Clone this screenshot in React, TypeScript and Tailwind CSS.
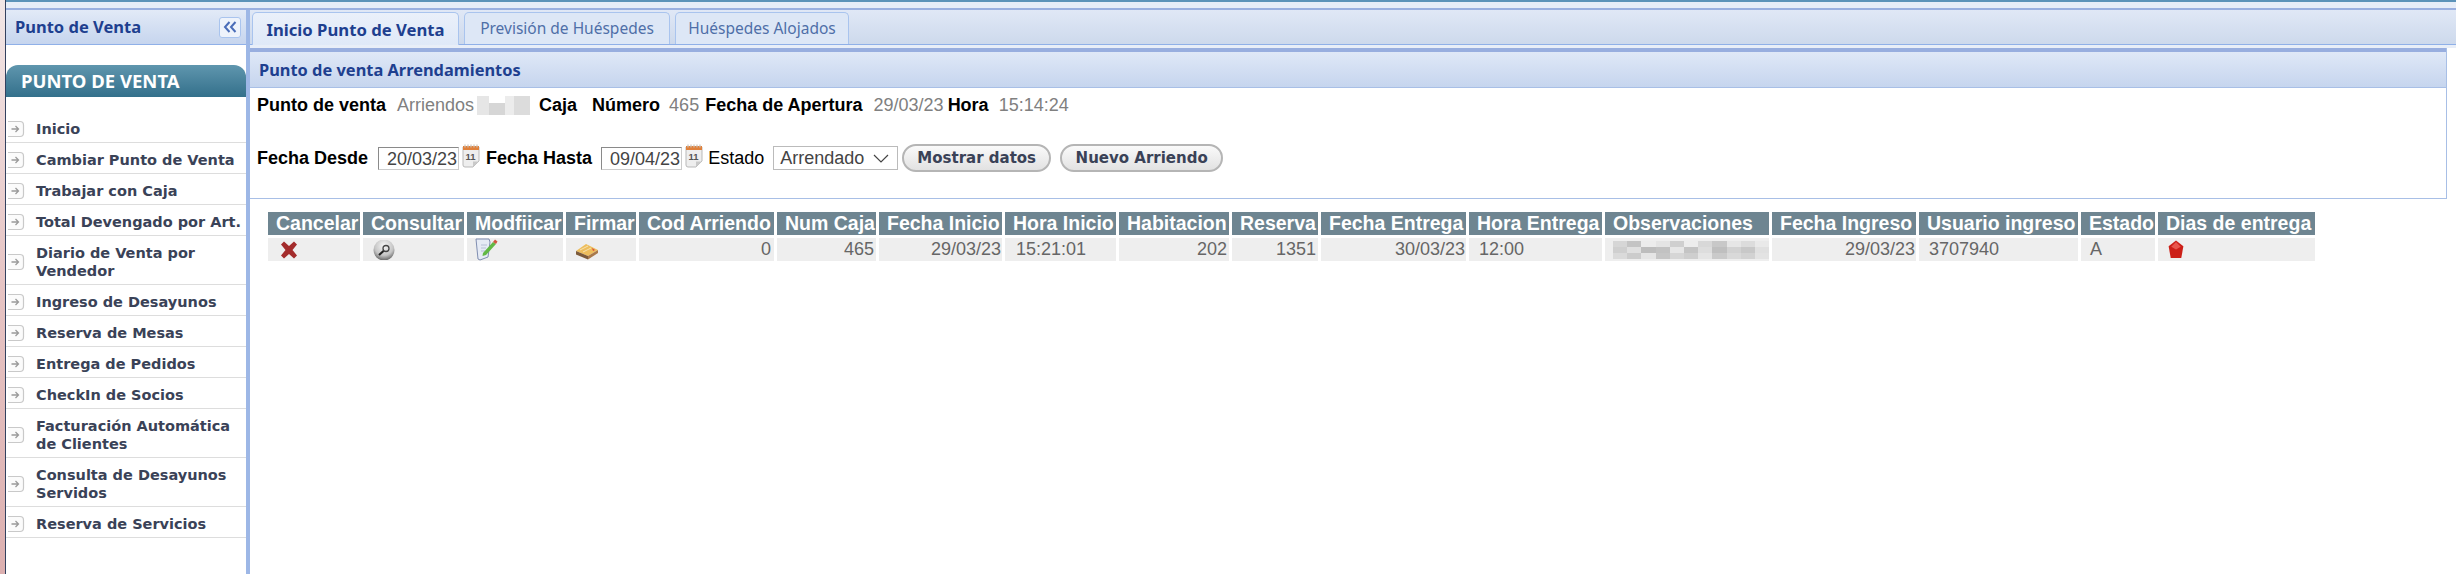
import React from 'react';

const menuItems = [
  { label: 'Inicio' },
  { label: 'Cambiar Punto de Venta' },
  { label: 'Trabajar con Caja' },
  { label: 'Total Devengado por Art.' },
  { label: 'Diario de Venta por Vendedor', tall: true },
  { label: 'Ingreso de Desayunos' },
  { label: 'Reserva de Mesas' },
  { label: 'Entrega de Pedidos' },
  { label: 'CheckIn de Socios' },
  { label: 'Facturación Automática de Clientes', tall: true },
  { label: 'Consulta de Desayunos Servidos', tall: true },
  { label: 'Reserva de Servicios' },
];

const columns = [
  { title: 'Cancelar', width: 'w-[92px]' },
  { title: 'Consultar', width: 'w-[101px]' },
  { title: 'Modfiicar', width: 'w-[96px]' },
  { title: 'Firmar', width: 'w-[70px]' },
  { title: 'Cod Arriendo', width: 'w-[135px]' },
  { title: 'Num Caja', width: 'w-[99px]' },
  { title: 'Fecha Inicio', width: 'w-[123px]' },
  { title: 'Hora Inicio', width: 'w-[111px]' },
  { title: 'Habitacion', width: 'w-[110px]' },
  { title: 'Reserva', width: 'w-[86px]' },
  { title: 'Fecha Entrega', width: 'w-[145px]' },
  { title: 'Hora Entrega', width: 'w-[133px]' },
  { title: 'Observaciones', width: 'w-[164px]' },
  { title: 'Fecha Ingreso', width: 'w-[144px]' },
  { title: 'Usuario ingreso', width: 'w-[159px]' },
  { title: 'Estado', width: 'w-[74px]' },
  { title: 'Dias de entrega', width: 'w-[157px]' },
];

const ArrowBox = () => (
  <svg width="18" height="18" viewBox="0 0 18 18" className="shrink-0">
    <path d="M1 1.5H13Q16.5 1.5 16.5 5V13Q16.5 16.5 13 16.5H1" fill="#fbfbfb" stroke="#c9c9c9" strokeWidth="1.2" />
    <path d="M4.5 9H11M8.5 6L11.5 9L8.5 12" fill="none" stroke="#9a9a9a" strokeWidth="1.3" />
  </svg>
);

const CalendarIcon = () => (
  <svg width="18" height="24" viewBox="0 0 18 24" className="shrink-0 -mt-[5px]">
    <path d="M1 3H17V17L11 23H3Q1 23 1 21Z" fill="#eeeeee" stroke="#b9b9b9" />
    <path d="M11 23V17.5H17Z" fill="#c9c9c9" />
    <rect x="1" y="2" width="16" height="4" fill="#e0803a" />
    <path d="M3 0.5V3.5M6 0.5V3.5M9 0.5V3.5M12 0.5V3.5M15 0.5V3.5" stroke="#c9c4bb" strokeWidth="1.2" />
    <text x="8.5" y="15.5" fontSize="9.500" fontWeight="700" textAnchor="middle" fill="#555" fontFamily="Liberation Sans, sans-serif">11</text>
  </svg>
);

const CancelIcon = () => (
  <svg width="18" height="18" viewBox="0 0 18 18">
    <path d="M1 3.500L4 0.500L9 5L14 0.500L17 3.500L12.500 9L17 14.500L14 17.500L9 13L4 17.500L1 14.500L5.500 9Z" fill="#a32c2c" />
  </svg>
);

const SearchIcon = () => (
  <svg width="24" height="20" viewBox="0 0 24 20">
    <defs>
      <radialGradient id="lens" cx="50%" cy="30%" r="70%">
        <stop offset="0%" stopColor="#f6f6f6" />
        <stop offset="65%" stopColor="#c4c4c4" />
        <stop offset="100%" stopColor="#666666" />
      </radialGradient>
    </defs>
    <circle cx="12" cy="10" r="10.500" fill="url(#lens)" />
    <circle cx="14" cy="8.500" r="3" fill="none" stroke="#444" strokeWidth="1.300" />
    <path d="M11.500 11L7 15" stroke="#222" strokeWidth="2.200" />
  </svg>
);

const EditIcon = () => (
  <svg width="23" height="23" viewBox="0 0 23 23">
    <path d="M1 1H14L15 4L13 19L5 22L3 21Z" fill="#e6ebf5" stroke="#7f8db0" />
    <path d="M6 7H12M6 10H11M6 13H10" stroke="#b7c0d6" />
    <path d="M8 15L18 4L21 6L11 17L7.500 18Z" fill="#62b845" />
    <path d="M18 4L20 1.500L22.500 3.500L21 6Z" fill="#d2553f" />
  </svg>
);

const BookIcon = () => (
  <svg width="24" height="17" viewBox="0 0 24 17">
    <path d="M1 8L11 1L23 7L13 13Z" fill="#edbd5c" />
    <path d="M1 8L13 13L13 16.500L1 11.500Z" fill="#7c5a3a" />
    <path d="M13 13L23 7V10L13 16.500Z" fill="#a9794a" />
    <path d="M5 7L13 3M8 9L16 5" stroke="#f7e2ae" />
    <path d="M17 5L20 7L18 8Z" fill="#d9483a" />
  </svg>
);

const AlertIcon = () => (
  <svg width="18" height="19" viewBox="0 0 17 18">
    <path d="M8.500 0.500L15.500 6L13.500 17H3.500L1.500 6Z" fill="#cc1f17" />
    <path d="M8.500 2L13 6.500L8.500 9L4 6.500Z" fill="#e8564c" />
  </svg>
);

const blurRows = [
  ['#d6d6d6', '#c4c4c4', '#ececec', '#e4e4e4', '#cfcfcf', '#ededed', '#d8d8d8', '#c8c8c8', '#e6e6e6', '#dcdcdc', '#e9e9e9'],
  ['#cfcfcf', '#e0e0e0', '#bdbdbd', '#c2c2c2', '#e6e6e6', '#c4c4c4', '#dddddd', '#bfbfbf', '#d2d2d2', '#c8c8c8', '#e0e0e0'],
  ['#dadada', '#cccccc', '#e5e5e5', '#c6c6c6', '#d6d6d6', '#cecece', '#e4e4e4', '#cacaca', '#d9d9d9', '#d2d2d2', '#e3e3e3'],
];

const cellBase = 'h-[23px] p-0 overflow-hidden whitespace-nowrap bg-[#eeeeee] text-[18px] leading-[23px] font-normal text-[#666666]';

const App = () => {
  return (
    <div className="flex h-[574px] w-[2456px] overflow-hidden bg-white font-['Liberation_Sans',sans-serif]">
      <div className="w-[5px] shrink-0 bg-gradient-to-b from-[#f1e6e6] via-[#e6c4c4] to-[#dcb0b0]" />
      <div className="w-px shrink-0 bg-[#33415f]" />

      <div className="flex min-w-0 flex-1 flex-col">
        {/* top strip */}
        <div className="h-[2px] bg-[#5c93b9]" />
        <div className="h-[6px] bg-[#e6edf8]" />
        <div className="h-[2px] bg-[#9ab0e0]" />

        <div className="flex min-h-0 flex-1">
          {/* sidebar */}
          <aside className="flex w-[240px] shrink-0 flex-col">
            <div className="flex h-[35px] items-center justify-between border-b border-[#8fb0e8] bg-gradient-to-b from-[#e2eaf7] to-[#c6d5ee] pr-[5px] pl-[9px] font-['Noto_Sans',sans-serif]">
              <span className="pt-px text-[16.5px] font-bold text-[#1e3f8f]">Punto de Venta</span>
              <div className="flex h-[21px] w-[22px] items-center justify-center rounded-[3px] border border-[#a9c4ee] bg-[#eef3fb]">
                <svg width="14" height="12" viewBox="0 0 14 12">
                  <path d="M6.500 1L2 6L6.500 11M12.500 1L8 6L12.500 11" fill="none" stroke="#4a6db8" strokeWidth="2" />
                </svg>
              </div>
            </div>

            <div className="mt-[20px] flex h-[32px] items-center rounded-t-[12px] bg-gradient-to-b from-[#5f96ae] to-[#33708b] pl-[15px] font-['Noto_Sans',sans-serif] text-[18.5px] leading-none font-bold text-white">
              PUNTO DE VENTA
            </div>

            <nav className="mt-[15px] flex flex-col font-['DejaVu_Sans',sans-serif] text-[14.5px] leading-[18px] font-bold text-[#3a4257]">
              {menuItems.map((item) => (
                <div
                  key={item.label}
                  className={`flex items-center gap-[11px] border-b border-[#dddddd] pt-[3px] pl-[1px] ${item.tall ? 'h-[49px]' : 'h-[31px]'}`}
                >
                  <ArrowBox />
                  <span className="w-[210px]">{item.label}</span>
                </div>
              ))}
            </nav>
          </aside>

          <div className="w-[4px] shrink-0 bg-[#9db7e6]" />

          {/* main area */}
          <main className="flex min-w-0 flex-1 flex-col">
            <div className="flex h-[35px] items-end gap-[5px] border-b border-[#8fb0e8] bg-gradient-to-b from-[#e0e8f6] to-[#cdd9ec] pl-[2px] font-['Noto_Sans',sans-serif] text-[15.5px]">
              <div className="z-10 -mb-px flex h-[33px] w-[207px] items-center justify-center rounded-t-[5px] border border-b-0 border-[#a9c4ee] bg-gradient-to-b from-[#eaf0fa] to-[#dfe9f8] pt-px text-[16.7px] font-bold text-[#1e3f8f]">
                Inicio Punto de Venta
              </div>
              <div className="flex h-[32px] w-[206px] items-center justify-center rounded-t-[5px] border border-b-0 border-[#a9c4ee] bg-[#dde7f6] pt-px text-[#4f6fa8]">
                Previsión de Huéspedes
              </div>
              <div className="flex h-[32px] w-[174px] items-center justify-center rounded-t-[5px] border border-b-0 border-[#a9c4ee] bg-[#dde7f6] pt-px text-[#4f6fa8]">
                Huéspedes Alojados
              </div>
            </div>
            <div className="h-[3px] bg-[#e8eef8]" />

            <section className="mr-[9px] border-r border-b border-[#a8bfe6]">
              <div className="h-[4px] bg-[#98aedf]" />
              <div className="flex h-[36px] items-center border-b border-[#a8bfe6] bg-gradient-to-b from-[#dfe8f7] to-[#c6d5ee] pt-px pl-[9px] font-['Noto_Sans',sans-serif] text-[16.4px] font-bold text-[#1e3f8f]">
                Punto de venta Arrendamientos
              </div>
              <div className="h-[110px] pt-[7px] pl-[7px] text-[18px] text-black">
                <div className="flex h-[21px] items-center whitespace-nowrap">
                  <b>Punto de venta</b>
                  <span className="ml-[11px] text-[#808080]">Arriendos</span>
                  <div className="mx-[3px] flex h-[19px] w-[53px]">
                    <div className="w-[12px] bg-[#e6e6e6]" />
                    <div className="h-[12px] w-[16px] self-end bg-[#d6d6d6]" />
                    <div className="w-[9px] bg-[#ececec]" />
                    <div className="w-[16px] bg-[#dcdcdc]" />
                  </div>
                  <b className="ml-[6px]">Caja</b>
                  <b className="ml-[15px]">Número</b>
                  <span className="ml-[9px] text-[#808080]">465</span>
                  <b className="ml-[6px]">Fecha de Apertura</b>
                  <span className="ml-[11px] text-[#808080]">29/03/23</span>
                  <b className="ml-[4px]">Hora</b>
                  <span className="ml-[10px] text-[#808080]">15:14:24</span>
                </div>

                <div className="mt-[30px] flex h-[24px] items-center whitespace-nowrap">
                  <b>Fecha Desde</b>
                  <div className="ml-[10px] h-[23px] w-[81px] border border-t-[#8a8a8a] border-r-[#cccccc] border-b-[#cccccc] border-l-[#8a8a8a] pr-px text-right leading-[23px] text-[#444444]">20/03/23</div>
                  <div className="mx-[3px] flex"><CalendarIcon /></div>
                  <b className="ml-[3px]">Fecha Hasta</b>
                  <div className="ml-[9px] h-[23px] w-[81px] border border-t-[#8a8a8a] border-r-[#cccccc] border-b-[#cccccc] border-l-[#8a8a8a] pr-px text-right leading-[23px] text-[#444444]">09/04/23</div>
                  <div className="mx-[3px] flex"><CalendarIcon /></div>
                  <span className="ml-[2px]">Estado</span>
                  <div className="ml-[9px] flex h-[24px] w-[125px] items-center justify-between border border-[#bbbbbb] pr-[8px] pl-[6px] text-[#444444]">
                    Arrendado
                    <svg width="16" height="9" viewBox="0 0 16 9">
                      <path d="M1 1L8 8L15 1" fill="none" stroke="#444444" strokeWidth="1.200" />
                    </svg>
                  </div>
                  <button className="ml-[4px] h-[28px] w-[149px] rounded-[14px] border-2 border-[#b5b5b5] bg-gradient-to-b from-[#fafafa] to-[#e2e2e2] font-['DejaVu_Sans',sans-serif] text-[15px] font-bold text-[#3a4257]">
                    Mostrar datos
                  </button>
                  <button className="ml-[9px] h-[28px] w-[163px] rounded-[14px] border-2 border-[#b5b5b5] bg-gradient-to-b from-[#fafafa] to-[#e2e2e2] font-['DejaVu_Sans',sans-serif] text-[15px] font-bold text-[#3a4257]">
                    Nuevo Arriendo
                  </button>
                </div>
              </div>
            </section>

            <table className="mt-[10px] ml-[15px] w-[2053px] table-fixed border-separate border-spacing-[3px]">
              <colgroup>
                {columns.map((col) => (
                  <col key={col.title} className={col.width} />
                ))}
              </colgroup>
              <thead>
                <tr>
                  {columns.map((col) => (
                    <th key={col.title} className="h-[23px] overflow-hidden bg-[#6e8591] p-0 pl-[8px] text-left text-[19.5px] leading-[23px] font-bold whitespace-nowrap text-white">
                      {col.title}
                    </th>
                  ))}
                </tr>
              </thead>
              <tbody>
                <tr>
                  <td className={`${cellBase} pl-[12px]`}><div className="flex"><CancelIcon /></div></td>
                  <td className={`${cellBase} pl-[9px]`}><div className="flex"><SearchIcon /></div></td>
                  <td className={`${cellBase} pl-[8px]`}><div className="flex"><EditIcon /></div></td>
                  <td className={`${cellBase} pl-[9px]`}><div className="flex pt-[4px]"><BookIcon /></div></td>
                  <td className={`${cellBase} pr-[3px] text-right`}>0</td>
                  <td className={`${cellBase} pr-[2px] text-right`}>465</td>
                  <td className={`${cellBase} pr-px text-right`}>29/03/23</td>
                  <td className={`${cellBase} pl-[11px]`}>15:21:01</td>
                  <td className={`${cellBase} pr-[2px] text-right`}>202</td>
                  <td className={`${cellBase} pr-[2px] text-right`}>1351</td>
                  <td className={`${cellBase} pr-px text-right`}>30/03/23</td>
                  <td className={`${cellBase} pl-[10px]`}>12:00</td>
                  <td className={`${cellBase} pl-[8px]`}>
                    <div className="flex h-[18px] w-[156px] flex-col">
                      {blurRows.map((row, i) => (
                        <div key={i} className="flex flex-1">
                          {row.map((color, j) => (
                            <div key={j} className="flex-1" style={{ backgroundColor: color }} />
                          ))}
                        </div>
                      ))}
                    </div>
                  </td>
                  <td className={`${cellBase} pr-px text-right`}>29/03/23</td>
                  <td className={`${cellBase} pl-[10px]`}>3707940</td>
                  <td className={`${cellBase} pl-[9px]`}>A</td>
                  <td className={`${cellBase} pl-[9px]`}><div className="flex"><AlertIcon /></div></td>
                </tr>
              </tbody>
            </table>
          </main>
        </div>
      </div>
    </div>
  );
};

export default App;
